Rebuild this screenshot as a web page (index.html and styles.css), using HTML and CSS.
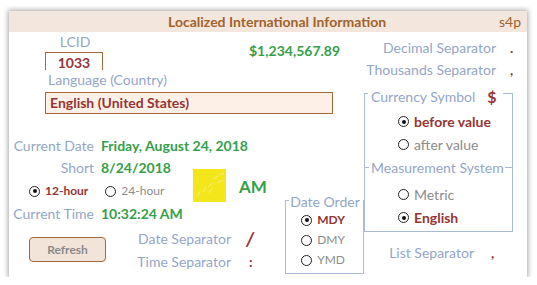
FILE: index.html
```html
<!DOCTYPE html>
<html lang="en">
<head>
  <meta charset="UTF-8" />
  <title>Localized International Information</title>
  <link rel="stylesheet" href="styles.css">
</head>
<body>
  <div class="panel">
    <div class="titlebar">
      <span class="title">Localized International Information</span>
      <span class="tag">s4p</span>
    </div>

    <div class="content">
      <div class="left">
        <div class="top-row">
          <div class="lcid">
            <div class="label lcid-label">LCID</div>
            <div class="lcid-box">1033</div>
          </div>
          <div class="amount">$1,234,567.89</div>
        </div>
        <div class="label lang-label">Language (Country)</div>
        <div class="lang-box">English (United States)</div>

        <div class="lower">
          <div class="main">
            <div class="field-row">
              <span class="label key">Current Date</span>
              <span class="green">Friday, August 24, 2018</span>
            </div>
            <div class="time-block">
              <div class="time-col">
                <div class="field-row">
                  <span class="label key">Short</span>
                  <span class="green">8/24/2018</span>
                </div>
                <div class="hour-row">
                  <span class="option"><span class="radio checked"></span><span class="opt on">12-hour</span></span>
                  <span class="option"><span class="radio"></span><span class="opt">24-hour</span></span>
                </div>
              </div>
              <svg class="sun" width="33" height="33" viewBox="0 0 33 33">
                <rect width="33" height="33" fill="#f3e61b" />
                <g stroke="#f7efa0" stroke-width="0.8">
                  <line x1="27" y1="6" x2="31" y2="4" />
                  <line x1="20" y1="10" x2="25" y2="7" />
                  <line x1="24" y1="14" x2="30" y2="11" />
                  <line x1="15" y1="18" x2="20" y2="14" />
                  <line x1="10" y1="23" x2="13" y2="18" />
                  <line x1="5" y1="27" x2="7" y2="22" />
                  <line x1="16" y1="24" x2="19" y2="19" />
                </g>
              </svg>
              <div class="ampm">AM</div>
            </div>
            <div class="field-row">
              <span class="label key">Current Time</span>
              <span class="green">10:32:24 AM</span>
            </div>
            <div class="bottom-row">
              <button class="refresh">Refresh</button>
              <div class="seps">
                <div class="sep-row">
                  <span class="label sep-label">Date Separator</span>
                  <span class="sep-val slash">/</span>
                </div>
                <div class="sep-row">
                  <span class="label sep-label">Time Separator</span>
                  <span class="sep-val colon">:</span>
                </div>
              </div>
            </div>
          </div>

          <div class="frame date-order">
            <div class="frame-title">Date Order</div>
            <div class="opt-row"><span class="radio checked"></span><span class="opt on">MDY</span></div>
            <div class="opt-row"><span class="radio"></span><span class="opt">DMY</span></div>
            <div class="opt-row"><span class="radio"></span><span class="opt">YMD</span></div>
          </div>
        </div>
      </div>

      <div class="right">
        <div class="info-row">
          <span class="label info-label">Decimal Separator</span>
          <span class="info-val">.</span>
        </div>
        <div class="info-row">
          <span class="label info-label">Thousands Separator</span>
          <span class="info-val">,</span>
        </div>

        <div class="frame currency">
          <div class="frame-title">
            <span>Currency Symbol</span>
            <span class="symbol">$</span>
          </div>
          <div class="opt-row"><span class="radio checked"></span><span class="opt on">before value</span></div>
          <div class="opt-row"><span class="radio"></span><span class="opt">after value</span></div>
        </div>

        <div class="frame measure">
          <div class="frame-title">Measurement System</div>
          <div class="opt-row"><span class="radio"></span><span class="opt">Metric</span></div>
          <div class="opt-row"><span class="radio checked"></span><span class="opt on">English</span></div>
        </div>

        <div class="info-row list-row">
          <span class="label list-label">List Separator</span>
          <span class="info-val">,</span>
        </div>
      </div>
    </div>
  </div>
</body>
</html>
```

FILE: styles.css
```css
body {
  margin: 0;
  background: #fff;
  font-family: Lato, "Open Sans", sans-serif;
  font-size: 14px;
  line-height: 16px;
}

.panel {
  margin: 11px 0 0 9px;
  width: 518px;
  height: 266px;
  background: #fff;
  box-shadow: 0 0 5px 1px rgba(0, 0, 0, 0.35);
}

.titlebar {
  height: 21px;
  display: flex;
  align-items: center;
  background: #f3e6dc;
  color: #a2622e;
}

.title {
  margin-left: 159px;
  font-weight: bold;
}

.tag {
  margin-left: auto;
  padding-right: 6px;
}

.content {
  display: flex;
}

.label {
  color: #93a6c9;
  white-space: nowrap;
}

.green {
  color: #35a049;
  font-weight: bold;
  white-space: nowrap;
}

/* left side */
.left {
  width: 355px;
  padding-top: 2px;
}

.top-row {
  display: flex;
  align-items: flex-start;
}

.lcid {
  margin-left: 36px;
  width: 58px;
}

.lcid-label {
  text-align: center;
  margin-left: 2px;
}

.lcid-box {
  margin-top: 2px;
  height: 17px;
  border: 1px solid #a2693b;
  border-bottom: none;
  text-align: center;
  line-height: 19px;
  color: #953535;
  font-weight: bold;
}

.amount {
  margin: 9px 0 0 146px;
  color: #35a049;
  font-weight: bold;
  white-space: nowrap;
}

.lang-label {
  margin: 2px 0 0 39px;
}

.lang-box {
  margin: 4px 0 0 36px;
  width: 282px;
  height: 20px;
  padding-left: 4px;
  border: 1px solid #a2693b;
  background: #fdf0e6;
  color: #953535;
  font-weight: bold;
  line-height: 20px;
}

.lower {
  display: flex;
  align-items: flex-start;
}

.main {
  width: 277px;
  padding-top: 21px;
}

.field-row {
  display: flex;
  align-items: center;
  height: 22px;
  gap: 7px;
}

.key {
  width: 85px;
  text-align: right;
}

.time-block {
  display: flex;
  align-items: flex-start;
}

.time-col {
  width: 184px;
}

.hour-row {
  display: flex;
  align-items: center;
  height: 24px;
  padding-left: 20px;
  gap: 17px;
  font-size: 12px;
}

.option {
  display: flex;
  align-items: center;
  gap: 5px;
}

.sun {
  display: block;
  margin-top: 12px;
}

.ampm {
  margin: 20px 0 0 13px;
  color: #35a049;
  font-weight: bold;
  font-size: 17px;
  line-height: 20px;
}

.bottom-row {
  display: flex;
  align-items: flex-start;
}

.refresh {
  margin: 12px 0 0 20px;
  width: 77px;
  height: 25px;
  border: 1px solid #a2693b;
  border-radius: 4px;
  background: #f3e4da;
  color: #8a8a8a;
  font-family: inherit;
  font-size: 12px;
  font-weight: bold;
  padding: 0;
}

.seps {
  margin: 2px 0 0 25px;
}

.sep-row {
  display: flex;
  align-items: center;
  height: 23px;
}

.sep-label {
  width: 100px;
  text-align: right;
}

.sep-val {
  padding-left: 15px;
  color: #953535;
  font-weight: bold;
}

.slash {
  font-size: 19px;
  font-style: italic;
}

.colon {
  padding-left: 18px;
}

/* radio buttons */
.radio {
  width: 9px;
  height: 9px;
  border: 1px solid #222;
  border-radius: 50%;
  background: #fff;
  display: inline-flex;
  align-items: center;
  justify-content: center;
  flex-shrink: 0;
}

.radio.checked::after {
  content: "";
  width: 4px;
  height: 4px;
  border-radius: 50%;
  background: #111;
}

.opt {
  color: #8c8c8c;
}

.opt.on {
  color: #953535;
  font-weight: bold;
}

/* frames */
.frame {
  border: 1px solid #a9bad6;
}

.frame-title {
  display: flex;
  background: #fff;
  color: #93a6c9;
  white-space: nowrap;
}

.opt-row {
  display: flex;
  align-items: center;
  gap: 5px;
}

.date-order {
  margin-top: 86px;
  width: 77px;
  height: 72px;
}

.date-order .frame-title {
  margin: -7px 0 0 3px;
  padding-left: 1px;
}

.date-order .opt-row {
  height: 20px;
  padding-left: 15px;
  font-size: 12px;
}

/* right side */
.right {
  width: 163px;
  padding-top: 5px;
}

.info-row {
  display: flex;
  align-items: center;
  height: 22px;
}

.info-label {
  width: 132px;
  text-align: right;
}

.info-val {
  padding-left: 14px;
  color: #953535;
  font-weight: bold;
}

.currency {
  margin-top: 12px;
  width: 147px;
  height: 73px;
  border-bottom: none;
}

.currency .frame-title {
  margin: -5px 9px 0 3px;
  padding-left: 3px;
}

.symbol {
  margin-left: 12px;
  color: #953535;
  font-weight: bold;
  font-size: 16px;
}

.currency .frame-title + .opt-row {
  margin-top: 5px;
}

.right .opt-row {
  height: 23px;
  padding-left: 33px;
}

.measure {
  width: 147px;
  height: 63px;
}

.measure .frame-title {
  margin: -8px 7px 0 4px;
  padding-left: 2px;
}

.measure .frame-title + .opt-row {
  margin-top: 7px;
}

.list-row {
  margin-top: 10px;
}

.list-label {
  width: 110px;
  text-align: right;
}

.list-row .info-val {
  padding-left: 17px;
}
```
